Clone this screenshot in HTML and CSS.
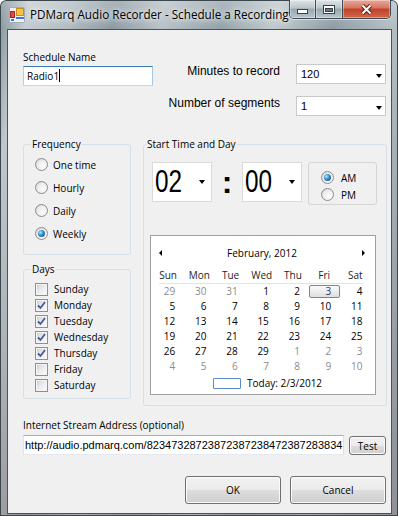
FILE: index.html
```html
<!DOCTYPE html>
<html lang="en">
<head>
    <meta charset="UTF-8">
    <meta name="viewport" content="width=device-width, initial-scale=1.0">
    <title>PDMarq Audio Recorder - Schedule a Recording</title>
    <link rel="stylesheet" href="styles.css">
</head>
<body>
    <div class="window">
        <!-- Title bar -->
        <div class="titlebar">
            <svg class="app-icon" width="16" height="16" viewBox="0 0 16 16">
                <rect x="0.5" y="0.5" width="15" height="15" rx="1" fill="#eef1f4" stroke="#a3abb3"/>
                <rect x="7.5" y="1.5" width="7" height="7" fill="#f5c542" stroke="#d08a1c"/>
                <rect x="1.5" y="4.5" width="4" height="6" fill="#e2483a" stroke="#a8281d"/>
                <rect x="7" y="10" width="8" height="2" fill="#3f78d1"/>
                <rect x="2" y="12" width="3" height="2" fill="#3f78d1"/>
            </svg>
            <span class="title">PDMarq Audio Recorder - Schedule a Recording</span>
            <div class="caption-buttons">
                <div class="cap cap-min">
                    <svg width="11" height="5" viewBox="0 0 11 5"><rect x="0.5" y="0.5" width="10" height="4" fill="#fff" stroke="#34424a"/></svg>
                </div>
                <div class="cap cap-max">
                    <svg width="12" height="9" viewBox="0 0 12 9">
                        <rect x="0.5" y="0.5" width="11" height="8" fill="#fff" stroke="#34424a"/>
                        <rect x="2.5" y="3.5" width="7" height="3" fill="#6c7b83" stroke="#34424a"/>
                    </svg>
                </div>
                <div class="cap cap-close">
                    <svg width="13" height="11" viewBox="0 0 13 11">
                        <path d="M2.5 1.5 L10.5 9.5 M10.5 1.5 L2.5 9.5" stroke="#5b1d12" stroke-width="4"/>
                        <path d="M2.5 1.5 L10.5 9.5 M10.5 1.5 L2.5 9.5" stroke="#fff" stroke-width="2"/>
                    </svg>
                </div>
            </div>
        </div>

        <div class="client">
            <!-- Name and record length -->
            <div class="top-row">
                <div class="name-field">
                    <div class="field-label">Schedule Name</div>
                    <div class="textbox focused">Radio1<span class="caret"></span></div>
                </div>
                <div class="record-options">
                    <div class="opt-label">Minutes to record</div>
                    <div class="combo">120<span class="arrow"></span></div>
                    <div class="opt-label">Number of segments</div>
                    <div class="combo">1<span class="arrow"></span></div>
                </div>
            </div>

            <div class="middle">
                <div class="left-col">
                    <fieldset class="group">
                        <legend>Frequency</legend>
                        <div class="freq-list">
                            <div class="radio-row"><span class="radio"></span>One time</div>
                            <div class="radio-row"><span class="radio"></span>Hourly</div>
                            <div class="radio-row"><span class="radio"></span>Daily</div>
                            <div class="radio-row"><span class="radio checked"></span>Weekly</div>
                        </div>
                    </fieldset>

                    <fieldset class="group">
                        <legend>Days</legend>
                        <div class="day-list">
                            <div class="check-row"><span class="check"></span>Sunday</div>
                            <div class="check-row"><span class="check"><svg width="9" height="9" viewBox="0 0 9 9"><polyline points="1,4.5 3.5,7 8,1" fill="none" stroke="#4a5c94" stroke-width="1.8"/></svg></span>Monday</div>
                            <div class="check-row"><span class="check"><svg width="9" height="9" viewBox="0 0 9 9"><polyline points="1,4.5 3.5,7 8,1" fill="none" stroke="#4a5c94" stroke-width="1.8"/></svg></span>Tuesday</div>
                            <div class="check-row"><span class="check"><svg width="9" height="9" viewBox="0 0 9 9"><polyline points="1,4.5 3.5,7 8,1" fill="none" stroke="#4a5c94" stroke-width="1.8"/></svg></span>Wednesday</div>
                            <div class="check-row"><span class="check"><svg width="9" height="9" viewBox="0 0 9 9"><polyline points="1,4.5 3.5,7 8,1" fill="none" stroke="#4a5c94" stroke-width="1.8"/></svg></span>Thursday</div>
                            <div class="check-row"><span class="check"></span>Friday</div>
                            <div class="check-row"><span class="check"></span>Saturday</div>
                        </div>
                    </fieldset>
                </div>

                <fieldset class="group start-group">
                    <legend>Start Time and Day</legend>
                    <div class="start-body">
                        <div class="time-row">
                            <div class="time-combo"><span class="big-num">02</span><span class="arrow"></span></div>
                            <span class="colon">:</span>
                            <div class="time-combo"><span class="big-num">00</span><span class="arrow"></span></div>
                            <div class="ampm">
                                <div class="ampm-row"><span class="radio checked"></span>AM</div>
                                <div class="ampm-row"><span class="radio"></span>PM</div>
                            </div>
                        </div>

                        <!-- Month calendar -->
                        <div class="calendar">
                            <div class="cal-title">
                                <span class="nav-left"></span>
                                <span class="month">February, 2012</span>
                                <span class="nav-right"></span>
                            </div>
                            <div class="cal-grid cal-head">
                                <span>Sun</span><span>Mon</span><span>Tue</span><span>Wed</span><span>Thu</span><span>Fri</span><span>Sat</span>
                            </div>
                            <div class="cal-sep"></div>
                            <div class="cal-grid cal-days">
                                <span class="other">29</span><span class="other">30</span><span class="other">31</span><span>1</span><span>2</span><span class="today">3</span><span>4</span>
                                <span>5</span><span>6</span><span>7</span><span>8</span><span>9</span><span>10</span><span>11</span>
                                <span>12</span><span>13</span><span>14</span><span>15</span><span>16</span><span>17</span><span>18</span>
                                <span>19</span><span>20</span><span>21</span><span>22</span><span>23</span><span>24</span><span>25</span>
                                <span>26</span><span>27</span><span>28</span><span>29</span><span class="other">1</span><span class="other">2</span><span class="other">3</span>
                                <span class="other">4</span><span class="other">5</span><span class="other">6</span><span class="other">7</span><span class="other">8</span><span class="other">9</span><span class="other">10</span>
                            </div>
                            <div class="cal-footer">
                                <span class="today-box"></span>
                                <span>Today: 2/3/2012</span>
                            </div>
                        </div>
                    </div>
                </fieldset>
            </div>

            <!-- Stream address -->
            <div class="stream">
                <div class="field-label">Internet Stream Address (optional)</div>
                <div class="stream-row">
                    <div class="textbox url">http://audio.pdmarq.com/8234732872387238723847238728383472</div>
                    <button class="btn test-btn">Test</button>
                </div>
            </div>

            <div class="dialog-buttons">
                <button class="btn">OK</button>
                <button class="btn">Cancel</button>
            </div>
        </div>
    </div>
</body>
</html>
```

FILE: styles.css
```css
body {
    margin: 0;
    background: #ffffff;
    font-family: "Open Sans", "Noto Sans", sans-serif;
    font-size: 10px;
    color: #000000;
}

/* Window frame (Aero glass look) */
.window {
    width: 398px;
    height: 516px;
    box-sizing: border-box;
    padding: 0 6px 2px 7px;
    display: flex;
    flex-direction: column;
    border-radius: 6px 6px 0 0;
    background:
        linear-gradient(to bottom, rgba(255, 255, 255, 0.25), rgba(255, 255, 255, 0) 28px),
        linear-gradient(to bottom, rgba(0, 0, 0, 0) 60px, rgba(150, 130, 130, 0.35) 100%),
        linear-gradient(100deg, #7f9098 0%, #c3ccd0 6%, #b4bfc4 14%, #8d9ca3 24%, #b9c3c8 34%, #94a3aa 46%, #c1cace 57%, #8f9ea5 69%, #b3bec3 81%, #8a989f 100%);
    box-shadow: inset 0 0 0 1px #3c474d;
}

.titlebar {
    height: 29px;
    display: flex;
    align-items: flex-start;
}

.app-icon {
    flex: none;
    margin: 7px 0 0 2px;
}

.title {
    margin: 6px 0 0 5px;
    font-size: 11.7px;
    line-height: 16px;
    white-space: nowrap;
    text-shadow: 0 0 5px #ffffff, 0 0 9px rgba(255, 255, 255, 0.8);
}

.caption-buttons {
    margin-left: auto;
    margin-right: 1px;
    height: 19px;
    display: flex;
    box-sizing: border-box;
    border: 1px solid #3f4b52;
    border-top: none;
    border-radius: 0 0 5px 5px;
    overflow: hidden;
    box-shadow: 0 1px 0 rgba(255, 255, 255, 0.55);
}

.cap {
    display: flex;
    align-items: center;
    justify-content: center;
    box-shadow: inset 0 0 0 1px rgba(255, 255, 255, 0.35);
}

.cap-min {
    width: 27px;
    align-items: flex-end;
    padding-bottom: 4px;
    box-sizing: border-box;
    border-right: 1px solid #3f4b52;
    background: linear-gradient(#dfe5e8, #bac5ca 45%, #98a6ad 50%, #b9c5cb);
}

.cap-max {
    width: 26px;
    border-right: 1px solid #3f4b52;
    background: linear-gradient(#dfe5e8, #bac5ca 45%, #98a6ad 50%, #b9c5cb);
}

.cap-close {
    width: 47px;
    background: linear-gradient(#e9aa9c, #d5755f 45%, #c0412a 50%, #d2674b);
}

/* Client area */
.client {
    flex: 1;
    background: #f0f0f0;
    border: 1px solid #49545a;
    padding: 0 4px 0 15px;
    display: flex;
    flex-direction: column;
}

.top-row {
    display: flex;
    align-items: flex-start;
}

.name-field {
    width: 130px;
    padding-top: 20px;
}

.field-label {
    line-height: 15px;
    margin-bottom: 1px;
    white-space: nowrap;
}

.textbox {
    height: 20px;
    box-sizing: border-box;
    border: 1px solid;
    border-color: #abadb3 #dbdfe6 #e3e9ef #e2e3ea;
    background: #ffffff;
    padding: 0 3px;
    line-height: 18px;
    white-space: nowrap;
    overflow: hidden;
}

.textbox.focused {
    border-color: #3d7bad #a4c9e3 #b7d9ed #b5cfe7;
}

.caret {
    display: inline-block;
    width: 1px;
    height: 13px;
    background: #000000;
    vertical-align: -2px;
}

.record-options {
    margin: 34px 1px 0 auto;
    display: grid;
    grid-template-columns: auto 90px;
    column-gap: 16px;
    row-gap: 12px;
    align-items: start;
}

.opt-label {
    font-family: "Liberation Sans", Arial, sans-serif;
    font-size: 12px;
    line-height: 15px;
    text-align: right;
}

.combo {
    height: 20px;
    box-sizing: border-box;
    border: 1px solid #c8c8c8;
    background: #ffffff;
    display: flex;
    align-items: center;
    padding: 0 3px 0 4px;
    font-family: "Liberation Sans", Arial, sans-serif;
    font-size: 11px;
}

.combo .arrow {
    margin: 3px 0 0 auto;
}

.arrow {
    width: 0;
    height: 0;
    border-left: 3.5px solid transparent;
    border-right: 3.5px solid transparent;
    border-top: 4px solid #000000;
}

/* Group boxes */
.middle {
    display: flex;
    align-items: flex-start;
    gap: 12px;
    margin-top: 21px;
}

.left-col {
    width: 108px;
    flex: none;
    display: flex;
    flex-direction: column;
    gap: 7px;
}

.group {
    margin: 0;
    padding: 0;
    min-inline-size: 0;
    border: 1px solid #d5dfe5;
    border-radius: 3px;
}

.group legend {
    margin-left: 7px;
    padding: 0 1px;
    line-height: 15px;
}

.freq-list {
    padding: 1px 0 9px 11px;
}

.radio-row {
    height: 23px;
    display: flex;
    align-items: center;
}

.radio {
    flex: none;
    width: 13px;
    height: 13px;
    box-sizing: border-box;
    margin-right: 5px;
    border: 1px solid #8c8c8c;
    border-radius: 50%;
    background: radial-gradient(circle at 65% 65%, #fdfdfd 0%, #ececec 55%, #c9c9c9 100%);
    display: inline-flex;
    align-items: center;
    justify-content: center;
}

.radio.checked::after {
    content: "";
    width: 7px;
    height: 7px;
    border-radius: 50%;
    background: radial-gradient(circle at 35% 35%, #b2e6fb 0%, #3a95d6 40%, #0f4a86 85%);
}

.day-list {
    padding: 4px 0 5px 11px;
}

.check-row {
    height: 16px;
    display: flex;
    align-items: center;
}

.check {
    flex: none;
    width: 13px;
    height: 13px;
    box-sizing: border-box;
    margin-right: 6px;
    border: 1px solid #8e8f8f;
    background: linear-gradient(135deg, #c9cdd3 0%, #eceef0 55%, #fbfbfb 100%);
    box-shadow: inset 0 0 0 1px #f4f4f4;
    display: inline-flex;
    align-items: center;
    justify-content: center;
}

.start-group {
    flex: 1;
}

.start-group legend {
    margin-left: 2px;
}

.start-body {
    padding: 10px 0 10px 6px;
}

.time-row {
    display: flex;
    align-items: flex-start;
    padding-left: 2px;
}

.time-combo {
    width: 60px;
    height: 40px;
    box-sizing: border-box;
    border: 1px solid #dadada;
    background: #ffffff;
    display: flex;
    align-items: center;
    padding: 0 6px 0 2px;
}

.time-combo .arrow {
    margin: 0 0 0 auto;
}

.big-num {
    display: inline-block;
    font-family: "Liberation Sans", Arial, sans-serif;
    font-size: 32px;
    line-height: 38px;
    transform: scaleX(0.76);
    transform-origin: left center;
    margin-top: -2px;
}

.colon {
    width: 30px;
    text-align: center;
    font-family: "Liberation Sans", Arial, sans-serif;
    font-size: 32px;
    font-weight: bold;
    line-height: 40px;
}

.ampm {
    width: 69px;
    height: 43px;
    box-sizing: border-box;
    margin-left: 6px;
    padding: 6px 0 0 12px;
    border: 1px solid #d5d5d5;
    border-radius: 3px;
}

.ampm-row {
    height: 17px;
    display: flex;
    align-items: center;
}

.ampm-row .radio {
    margin-right: 7px;
}

/* Month calendar */
.calendar {
    width: 226px;
    height: 160px;
    box-sizing: border-box;
    margin-top: 30px;
    border: 1px solid #a0a0a0;
    background: #ffffff;
    padding: 8px 4px 0 1.5px;
}

.cal-title {
    height: 18px;
    display: flex;
    align-items: center;
}

.cal-title .month {
    flex: 1;
    text-align: center;
}

.nav-left {
    margin-left: 6.5px;
    border-top: 3px solid transparent;
    border-bottom: 3px solid transparent;
    border-right: 3px solid #000000;
}

.nav-right {
    margin-right: 6px;
    border-top: 3px solid transparent;
    border-bottom: 3px solid transparent;
    border-left: 3px solid #000000;
}

.cal-grid {
    display: grid;
    grid-template-columns: repeat(7, 1fr);
}

.cal-head {
    margin-top: 6px;
    line-height: 15px;
    text-align: center;
    color: #1e1e1e;
}

.cal-sep {
    margin-left: 6.5px;
    width: 204px;
    height: 1px;
    background: #e4e4e4;
}

.cal-days span {
    height: 15px;
    box-sizing: border-box;
    line-height: 15px;
    text-align: right;
    padding-right: 8.5px;
}

.cal-days .other {
    color: #8b8b8b;
}

.cal-days .today {
    margin: 1px 0;
    height: 13px;
    line-height: 11px;
    padding-right: 7.5px;
    border: 1px solid #5d8bc5;
    border-radius: 2px;
    background: linear-gradient(#fafafa, #dedede);
    color: #1d3b66;
}

.cal-footer {
    height: 16px;
    margin-top: 1px;
    padding-left: 60.5px;
    display: flex;
    align-items: center;
}

.today-box {
    width: 28px;
    height: 11px;
    box-sizing: border-box;
    margin-right: 6px;
    border: 1px solid #5d8bc5;
    border-radius: 1px;
}

/* Stream address */
.stream {
    margin-top: 12px;
}

.stream .field-label {
    margin-bottom: 2px;
}

.stream-row {
    display: flex;
    align-items: flex-start;
}

.textbox.url {
    width: 321px;
    padding: 0 1px;
    font-family: "Liberation Sans", Arial, sans-serif;
    font-size: 11px;
}

.btn {
    box-sizing: border-box;
    padding: 0;
    border: 1px solid #707070;
    border-radius: 3px;
    background: linear-gradient(#f2f2f2 0%, #ebebeb 50%, #dddddd 51%, #cfcfcf 100%);
    box-shadow: inset 0 0 0 1px #fbfbfb;
    font-family: inherit;
    font-size: 10px;
    color: #000000;
}

.test-btn {
    width: 37px;
    height: 19px;
    margin: 1px 1px 0 5px;
}

.dialog-buttons {
    display: flex;
    justify-content: flex-end;
    gap: 9px;
    margin: 21px 1px 0 0;
}

.dialog-buttons .btn {
    width: 96px;
    height: 28px;
}
```
